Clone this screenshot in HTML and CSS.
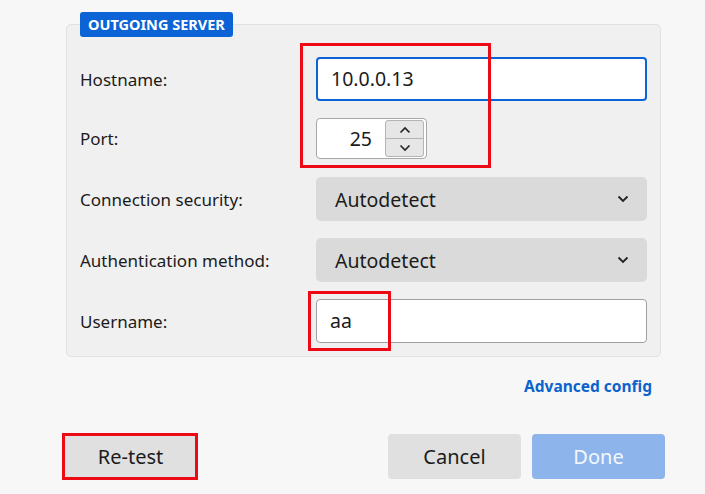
FILE: index.html
```html
<!DOCTYPE html>
<html>
<head>
<meta charset="utf-8">
<link rel="stylesheet" href="styles.css">
</head>
<body>
<div class="page">
  <section class="group">
    <div class="legend">OUTGOING SERVER</div>
    <div class="form">
      <div class="row">
        <label class="label">Hostname:</label>
        <div class="input focused">10.0.0.13</div>
      </div>
      <div class="row row-port">
        <label class="label">Port:</label>
        <div class="port">
          <span class="port-val">25</span>
          <div class="spin">
            <div class="spin-btn"><svg width="12" height="8" viewBox="0 0 12 8"><path d="M1.5 6.5 L6 2 L10.5 6.5" fill="none" stroke="#222" stroke-width="1.6"/></svg></div>
            <div class="spin-btn"><svg width="12" height="8" viewBox="0 0 12 8"><path d="M1.5 1.5 L6 6 L10.5 1.5" fill="none" stroke="#222" stroke-width="1.6"/></svg></div>
          </div>
        </div>
      </div>
      <div class="row">
        <label class="label">Connection security:</label>
        <div class="select"><span>Autodetect</span><svg width="12" height="8" viewBox="0 0 12 8"><path d="M1.5 1.5 L6 6 L10.5 1.5" fill="none" stroke="#222" stroke-width="1.8"/></svg></div>
      </div>
      <div class="row">
        <label class="label">Authentication method:</label>
        <div class="select"><span>Autodetect</span><svg width="12" height="8" viewBox="0 0 12 8"><path d="M1.5 1.5 L6 6 L10.5 1.5" fill="none" stroke="#222" stroke-width="1.8"/></svg></div>
      </div>
      <div class="row">
        <label class="label">Username:</label>
        <div class="input">aa</div>
      </div>
    </div>
  </section>
  <div class="advanced"><a class="link">Advanced config</a></div>
  <div class="actions">
    <button class="btn">Re-test</button>
    <div class="actions-right">
      <button class="btn">Cancel</button>
      <button class="btn primary">Done</button>
    </div>
  </div>
  <div class="mark mark-host"></div>
  <div class="mark mark-user"></div>
  <div class="mark mark-retest"></div>
</div>
</body>
</html>
```
FILE: styles.css
```css
* { box-sizing: border-box; }
html, body { margin: 0; padding: 0; }
body {
  background: #f7f7f7;
  font-family: "Noto Sans", "Open Sans", sans-serif;
  color: #1b1b1b;
  width: 705px;
  height: 494px;
  overflow: hidden;
}
.page {
  position: relative;
  padding-top: 24px;
}
.group {
  position: relative;
  margin: 0 44px 0 66px;
  background: #f0f0f0;
  border: 1px solid #e1e1e1;
  border-radius: 5px;
  padding: 32px 13px 13px 13px;
}
.legend {
  position: absolute;
  top: -13px;
  left: 13px;
  height: 25px;
  padding: 0 8px;
  background: #0b63d6;
  color: #fff;
  font-weight: 700;
  font-size: 14.5px;
  line-height: 25px;
  border-radius: 3px;
}
.form {
  display: flex;
  flex-direction: column;
  gap: 17px;
}
.row {
  display: grid;
  grid-template-columns: 236px 1fr;
  align-items: center;
  height: 44px;
}
.row-port { height: 42px; align-items: start; }
.row-port .label { line-height: 42px; }
.label {
  font-size: 17px;
  color: #1b1b1b;
}
.input {
  height: 44px;
  background: #fff;
  border: 1px solid #a0a0a0;
  border-radius: 4px;
  padding: 0 13px;
  font-size: 19.5px;
  line-height: 42px;
}
.input.focused {
  border: 2px solid #0b63d6;
  line-height: 40px;
}
.port {
  width: 111px;
  height: 41px;
  background: #fff;
  border: 1px solid #a8a8a8;
  border-radius: 4px;
  display: flex;
  align-items: center;
  justify-content: flex-end;
  padding-right: 2px;
}
.port-val {
  font-size: 19.5px;
  margin-right: 13px;
}
.spin {
  width: 39px;
  height: 37px;
  border: 1px solid #b4b4b4;
  border-radius: 3px;
  background: #e6e6e6;
  display: flex;
  flex-direction: column;
}
.spin-btn {
  flex: 1;
  display: flex;
  align-items: center;
  justify-content: center;
}
.spin-btn + .spin-btn { border-top: 1px solid #b4b4b4; }
.select {
  height: 44px;
  background: #dadada;
  border-radius: 5px;
  padding: 0 18px 0 19px;
  display: flex;
  align-items: center;
  justify-content: space-between;
  font-size: 19.5px;
}
.advanced {
  display: flex;
  justify-content: flex-end;
  padding-right: 53px;
  margin-top: 19px;
  height: 20px;
}
.link {
  color: #0b63cc;
  font-weight: 700;
  font-size: 15.5px;
  line-height: 20px;
}
.actions {
  display: flex;
  justify-content: space-between;
  margin-top: 38px;
  padding: 0 40px 0 64px;
}
.actions-right {
  display: flex;
  gap: 11px;
}
.btn {
  width: 133px;
  height: 45px;
  border: none;
  border-radius: 4px;
  background: #e0e0e0;
  font-family: inherit;
  font-size: 20px;
  color: #1b1b1b;
  padding: 0;
}
.btn.primary {
  background: #8db5ec;
  color: #f4f8fe;
}
.mark {
  position: absolute;
  border: 3px solid #ee0a14;
}
.mark-host { left: 300px; top: 43px; width: 191px; height: 125px; }
.mark-user { left: 308px; top: 291px; width: 83px; height: 60px; }
.mark-retest { left: 62px; top: 433px; width: 136px; height: 47px; }
```
